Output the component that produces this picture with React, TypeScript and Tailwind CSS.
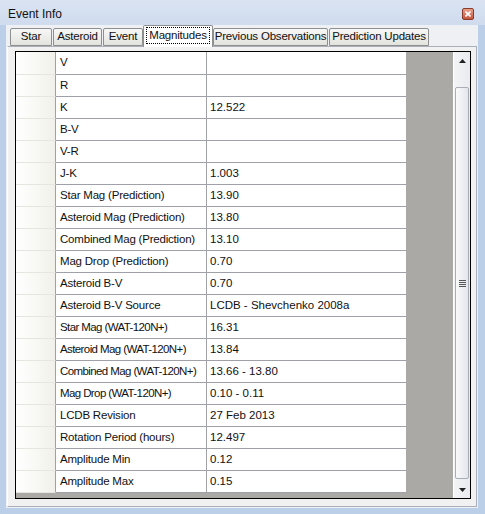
import React from 'react'

const rows: Array<[string, string]> = [
  ['V', ''],
  ['R', ''],
  ['K', '12.522'],
  ['B-V', ''],
  ['V-R', ''],
  ['J-K', '1.003'],
  ['Star Mag (Prediction)', '13.90'],
  ['Asteroid Mag (Prediction)', '13.80'],
  ['Combined Mag (Prediction)', '13.10'],
  ['Mag Drop (Prediction)', '0.70'],
  ['Asteroid B-V', '0.70'],
  ['Asteroid B-V Source', 'LCDB - Shevchenko 2008a'],
  ['Star Mag (WAT-120N+)', '16.31'],
  ['Asteroid Mag (WAT-120N+)', '13.84'],
  ['Combined Mag (WAT-120N+)', '13.66 - 13.80'],
  ['Mag Drop (WAT-120N+)', '0.10 - 0.11'],
  ['LCDB Revision', '27 Feb 2013'],
  ['Rotation Period (hours)', '12.497'],
  ['Amplitude Min', '0.12'],
  ['Amplitude Max', '0.15'],
]

function Tab({ label, className }: { label: string; className: string }) {
  return (
    <div
      className={`h-[18px] border border-[#8e8f8f] rounded-t-[2px] bg-gradient-to-b from-[#f7f7f7] to-[#e3e3de] flex items-center justify-center whitespace-nowrap tracking-[-0.2px] text-[#111] ${className}`}
    >
      {label}
    </div>
  )
}

export default function App() {
  return (
    <div className="w-[485px] h-[514px] bg-[#bccfe8] flex flex-col font-['Liberation_Sans',Arial,sans-serif] text-[11.5px] leading-none text-black overflow-hidden">
      {/* Title bar */}
      <div className="h-[25px] shrink-0 bg-gradient-to-b from-[#d9e3f2] to-[#cfdcee] flex items-center pl-[8px] pr-[11px] pt-[3px]">
        <span className="text-[12px] text-[#111]">Event Info</span>
        <div className="ml-auto w-[12px] h-[12px] rounded-[2px] border border-[#8a3a2a] bg-gradient-to-b from-[#e8a08a] to-[#c4553c] flex items-center justify-center">
          <svg width="6" height="6" viewBox="0 0 6 6">
            <path d="M0.5 0.5 L5.5 5.5 M5.5 0.5 L0.5 5.5" stroke="#fff" strokeWidth="1.6" />
          </svg>
        </div>
      </div>

      {/* Client area */}
      <div className="flex-1 ml-[6px] mr-[7px] mb-[6px] bg-[#eef0f4] flex flex-col">
        {/* Tabs */}
        <div className="h-[21px] shrink-0 flex items-end pl-[4px] relative z-10">
          <Tab label="Star" className="w-[42px]" />
          <Tab label="Asteroid" className="w-[49px] ml-[1px]" />
          <Tab label="Event" className="w-[40px] ml-[1px]" />
          <div className="w-[70px] h-[22px] -mb-px border border-b-0 border-[#8e8f8f] rounded-t-[2px] bg-white flex items-center justify-center px-[2px] pb-[2px]">
            <div className="w-full h-[17px] border border-dotted border-black flex items-center justify-center whitespace-nowrap tracking-[-0.2px] text-[#111]">
              Magnitudes
            </div>
          </div>
          <Tab label="Previous Observations" className="w-[115px]" />
          <Tab label="Prediction Updates" className="w-[100px] ml-[1px]" />
        </div>

        {/* Tab page */}
        <div className="flex-1 mx-[1px] mb-[1px] border border-[#a9b0bc] border-l-white bg-[#f1f1f1] pl-[7px] pt-[4px] pr-[5px] pb-[7px] flex">
          <div className="flex-1 border border-black flex">
            {/* Grid */}
            <div className="flex-1 bg-[#aaa9a5] flex flex-col">
              {rows.map(([name, value], i) => (
                <div key={name} className={`${i === 0 ? 'h-[23px]' : 'h-[22px]'} flex shrink-0`}>
                  <div className="w-[40px] border-r border-[#a0a0a8] border-b border-b-[#e6e6e0] bg-gradient-to-r from-white to-[#f1f1ea]" />
                  <div
                    className={`w-[151px] border-r border-b border-[#a0a0a8] bg-white flex items-center pl-[4px] whitespace-nowrap text-[#111] ${
                      name.includes('WAT') ? 'tracking-[-0.6px]' : 'tracking-[-0.2px]'
                    }`}
                  >
                    {name}
                  </div>
                  <div className="w-[199px] border-b border-[#a0a0a8] bg-white flex items-center pl-[3px] whitespace-nowrap text-[#111]">
                    {value}
                  </div>
                </div>
              ))}
            </div>

            {/* Scrollbar */}
            <div className="w-[17px] bg-gradient-to-r from-[#f4f4f6] to-[#e9ebf0] border-l border-white flex flex-col">
              <div className="h-[17px] flex items-center justify-center">
                <svg width="7" height="4" viewBox="0 0 7 4">
                  <path d="M3.5 0 L7 4 L0 4 Z" fill="#222" />
                </svg>
              </div>
              <div className="h-[18px]" />
              <div className="h-[392px] mx-[1px] rounded-[2px] border border-[#a8acb4] bg-gradient-to-r from-[#fafafa] to-[#e4e6ee] flex items-center justify-center">
                <svg width="7" height="7" viewBox="0 0 7 7">
                  <path d="M0 0.5 H7 M0 2.5 H7 M0 4.5 H7 M0 6.5 H7" stroke="#555" strokeWidth="1" />
                </svg>
              </div>
              <div className="flex-1" />
              <div className="h-[17px] flex items-center justify-center">
                <svg width="7" height="4" viewBox="0 0 7 4">
                  <path d="M0 0 L7 0 L3.5 4 Z" fill="#222" />
                </svg>
              </div>
            </div>
          </div>
        </div>
      </div>
    </div>
  )
}
